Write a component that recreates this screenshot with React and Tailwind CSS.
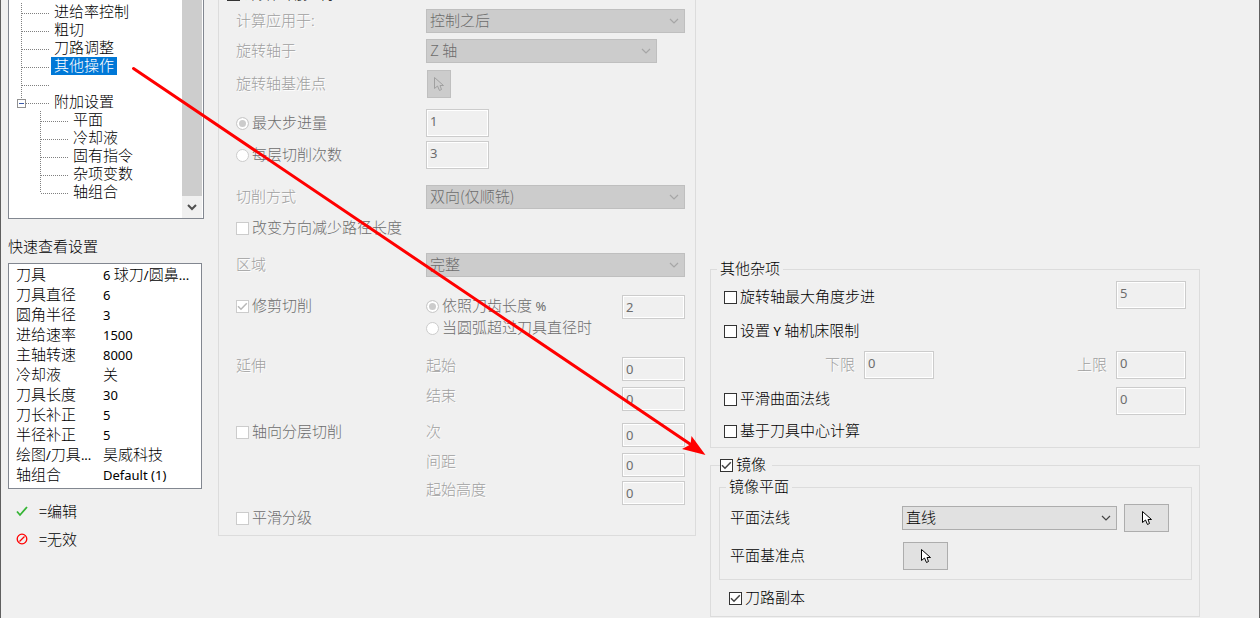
import React from "react";

const CURSOR_OUTLINE =
  "M0.5 0.5v11l3-2.5 2 4.5 2-1-1.5-4h3.5z";

function Latin({ children }) {
  return (
    <span className="font-['Noto_Sans',sans-serif] text-[13px] leading-none font-normal">
      {children}
    </span>
  );
}

function Caption({ children, className = "" }) {
  return (
    <span className={`pb-[2px] leading-[16px] text-[#a0a0a0] [text-shadow:1px_1px_0_#fff] ${className}`}>
      {children}
    </span>
  );
}

function Check({ checked, disabled, children, className = "" }) {
  return (
    <label
      className={`flex items-center gap-[3px] leading-[16px] whitespace-nowrap ${
        disabled ? "text-[#6d6d6d]" : "text-black"
      } ${className}`}
    >
      <span className="grid size-[13px] shrink-0">
        <input
          type="checkbox"
          defaultChecked={checked}
          disabled={disabled}
          className="peer col-start-1 row-start-1 size-[13px] appearance-none border border-[#333] bg-white disabled:border-[#ccc]"
        />
        <svg
          viewBox="0 0 13 13"
          className="pointer-events-none invisible col-start-1 row-start-1 size-[13px] text-[#444] peer-checked:visible peer-disabled:text-[#b8b8b8]"
          fill="none"
          stroke="currentColor"
          strokeWidth="1.5"
        >
          <path d="M2 6.2l3 3 5.8-6" />
        </svg>
      </span>
      <span className="pb-[2px]">{children}</span>
    </label>
  );
}

function Radio({ name, checked, children, className = "" }) {
  return (
    <label
      className={`flex items-center gap-[3px] leading-[16px] whitespace-nowrap text-[#6d6d6d] ${className}`}
    >
      <input
        type="radio"
        name={name}
        defaultChecked={checked}
        disabled
        className="size-[13px] shrink-0 appearance-none rounded-full border border-[#ccc] bg-white checked:bg-[#ccc] checked:shadow-[inset_0_0_0_2px_#fff]"
      />
      <span className="pb-[2px]">{children}</span>
    </label>
  );
}

function Field({ label, value, className = "" }) {
  return (
    <input
      type="text"
      aria-label={label}
      defaultValue={value}
      disabled
      className={`shrink-0 border border-[#ccc] bg-[#f0f0f0] pl-[3px] font-['Noto_Sans',sans-serif] text-[13px] font-normal text-[#6d6d6d] shadow-[inset_0_0_0_1px_#fff] ${className}`}
    />
  );
}

function Select({ label, value, disabled, className = "" }) {
  return (
    <span className={`grid h-[24px] ${className}`}>
      <select
        aria-label={label}
        disabled={disabled}
        defaultValue={value}
        className="col-start-1 row-start-1 h-[24px] w-full appearance-none border border-[#adadad] bg-[#e1e1e1] pr-6 pb-[2px] pl-[3px] leading-[20px] text-black opacity-100 disabled:border-[#bfbfbf] disabled:bg-[#ccc] disabled:text-[#6d6d6d]"
      >
        <option>{value}</option>
      </select>
      <svg
        viewBox="0 0 10 6"
        className={`pointer-events-none col-start-1 row-start-1 mr-[6px] h-[6px] w-[10px] self-center justify-self-end ${
          disabled ? "text-[#a6a6a6]" : "text-[#444]"
        }`}
        fill="none"
        stroke="currentColor"
        strokeWidth="1.2"
      >
        <path d="M1 1l4 4 4-4" />
      </svg>
    </span>
  );
}

function PickButton({ label, disabled, className = "" }) {
  return (
    <button
      type="button"
      aria-label={label}
      disabled={disabled}
      className={`flex h-[28px] shrink-0 items-center justify-center border border-[#adadad] bg-[#e1e1e1] text-black disabled:border-[#bfbfbf] disabled:bg-[#ccc] disabled:text-[#a0a0a0] ${className}`}
    >
      <svg viewBox="0 0 10 15" className="h-[15px] w-[10px]" stroke="currentColor" strokeWidth="1">
        <path d={CURSOR_OUTLINE} fill={disabled ? "none" : "#fff"} />
      </svg>
    </button>
  );
}

const TREE = [
  { text: "进给率控制", level: 1 },
  { text: "粗切", level: 1 },
  { text: "刀路调整", level: 1 },
  { text: "其他操作", level: 1, selected: true },
  { text: "", level: 1 },
  { text: "附加设置", level: 1, expander: true },
  { text: "平面", level: 2 },
  { text: "冷却液", level: 2 },
  { text: "固有指令", level: 2 },
  { text: "杂项变数", level: 2 },
  { text: "轴组合", level: 2, last: true },
];

function Guide({ level, expander, last }) {
  const x = level === 1 ? 12.5 : 31.5;
  return (
    <svg
      className={level === 1 ? "h-[18px] w-[42px] shrink-0" : "h-[18px] w-[61px] shrink-0"}
      fill="none"
      stroke="#808080"
      strokeDasharray="1 1"
      shapeRendering="crispEdges"
    >
      <path d={`M${x} 0V${expander || last ? 10 : 18}`} />
      <path d={`M${x} 10.5h27`} />
      {expander && (
        <g strokeDasharray="none">
          <rect x="8.5" y="6.5" width="8" height="8" fill="#fff" stroke="#919191" />
          <path d="M10 10.5h5" stroke="#3b5aa8" />
        </g>
      )}
    </svg>
  );
}

function Tree() {
  return (
    <div className="flex h-[219px] w-[196px] border border-t-0 border-[#828790] bg-white">
      <ul className="flex-1 pt-[3px]">
        {TREE.map((node, i) => (
          <li key={i} className="flex h-[18px] items-center">
            <Guide {...node} />
            {node.text && (
              <button
                type="button"
                className={`h-[18px] px-[3px] pb-[2px] leading-[16px] ${
                  node.selected ? "bg-[#0078d7] text-white" : "text-black"
                }`}
              >
                {node.text}
              </button>
            )}
          </li>
        ))}
      </ul>
      <div className="mr-[1px] flex w-[20px] flex-col bg-[#f0f0f0]">
        <div className="flex-1 bg-[#cdcdcd]" />
        <button type="button" aria-label="向下滚动" className="flex h-[22px] items-center justify-center">
          <svg viewBox="0 0 10 7" className="h-[7px] w-[10px]" fill="none" stroke="#505050" strokeWidth="2">
            <path d="M1 1l4 4 4-4" />
          </svg>
        </button>
      </div>
    </div>
  );
}

const SETTINGS = [
  ["刀具", <><Latin>6 </Latin>球刀<Latin>/</Latin>圆鼻<Latin>...</Latin></>],
  ["刀具直径", <Latin>6</Latin>],
  ["圆角半径", <Latin>3</Latin>],
  ["进给速率", <Latin>1500</Latin>],
  ["主轴转速", <Latin>8000</Latin>],
  ["冷却液", "关"],
  ["刀具长度", <Latin>30</Latin>],
  ["刀长补正", <Latin>5</Latin>],
  ["半径补正", <Latin>5</Latin>],
  [<>绘图<Latin>/</Latin>刀具<Latin>...</Latin></>, "昊威科技"],
  ["轴组合", <Latin>Default (1)</Latin>],
];

function QuickView() {
  return (
    <section>
      <h2 className="mt-[18px] leading-[18px]">快速查看设置</h2>
      <div className="mt-[8px] w-[194px] border border-[#828790] bg-white pb-[4px]">
        <table className="w-full table-fixed">
          <tbody>
            {SETTINGS.map(([name, value], i) => (
              <tr key={i} className="h-[20px]">
                <th scope="row" className="w-[94px] pl-[7px] text-left leading-[18px] font-light whitespace-nowrap">
                  {name}
                </th>
                <td className="leading-[18px] whitespace-nowrap">{value}</td>
              </tr>
            ))}
          </tbody>
        </table>
      </div>
      <ul className="mt-[8px] pl-[8px]">
        <li className="flex h-[28px] items-center gap-[11px] leading-[18px]">
          <svg viewBox="0 0 12 12" className="size-[12px]" fill="none" stroke="#35b535" strokeWidth="1.8">
            <path d="M1 6.5l3 3.5 7-8" />
          </svg>
          <span>=编辑</span>
        </li>
        <li className="flex h-[28px] items-center gap-[11px] leading-[18px]">
          <svg viewBox="0 0 12 12" className="size-[12px]" fill="none" stroke="#f00" strokeWidth="1.3">
            <circle cx="6" cy="6" r="4.8" />
            <path d="M3.5 8.5l5-5" />
          </svg>
          <span>=无效</span>
        </li>
      </ul>
    </section>
  );
}

function Row({ className = "", children }) {
  return <div className={`grid grid-cols-[190px_minmax(0,1fr)] ${className}`}>{children}</div>;
}

function ValueRow({ lead, label, value, className }) {
  return (
    <Row className={`items-start ${className}`}>
      {lead || <span />}
      <div className="flex items-start justify-between">
        <Caption>{label}</Caption>
        <Field label={label} value={value} className="h-[24px] w-[63px]" />
      </div>
    </Row>
  );
}

function AxisGroup() {
  return (
    <section className="self-start border border-t-0 border-[#dcdcdc] pr-[10px] pb-[8px] pl-[17px]">
      <Check checked className="-mt-[15px] -ml-[9px] h-[18px]">计算应用控制</Check>
      <Row className="mt-[6px] items-center">
        <Caption>计算应用于:</Caption>
        <Select label="计算应用于" value="控制之后" disabled />
      </Row>
      <Row className="mt-[6px] items-center">
        <Caption>旋转轴于</Caption>
        <Select label="旋转轴于" value="Z 轴" disabled className="mr-[28px]" />
      </Row>
      <Row className="mt-[7px] items-center">
        <Caption>旋转轴基准点</Caption>
        <PickButton label="选择旋转轴基准点" disabled className="ml-[1px] w-[24px]" />
      </Row>
      <Row className="mt-[11px] items-center">
        <Radio name="step" checked>最大步进量</Radio>
        <Field label="最大步进量" value="1" className="h-[28px] w-[63px] pb-[4px]" />
      </Row>
      <Row className="mt-[4px] items-center">
        <Radio name="step">每层切削次数</Radio>
        <Field label="每层切削次数" value="3" className="h-[28px] w-[63px] pb-[4px]" />
      </Row>
      <Row className="mt-[16px] items-center">
        <Caption>切削方式</Caption>
        <Select label="切削方式" value="双向(仅顺铣)" disabled />
      </Row>
      <Check disabled className="mt-[10px]">改变方向减少路径长度</Check>
      <Row className="mt-[16px] items-center">
        <Caption>区域</Caption>
        <Select label="区域" value="完整" disabled />
      </Row>
      <Row className="mt-[18px] h-[62px] items-start">
        <Check disabled checked className="h-[22px]">修剪切削</Check>
        <div className="flex items-start justify-between">
          <div>
            <Radio name="trim" checked className="h-[22px]">
              依照刀齿长度<Latin> %</Latin>
            </Radio>
            <Radio name="trim" className="h-[22px]">当圆弧超过刀具直径时</Radio>
          </div>
          <Field label="刀齿长度百分比" value="2" className="h-[24px] w-[63px]" />
        </div>
      </Row>
      <ValueRow className="h-[30px]" lead={<Caption>延伸</Caption>} label="起始" value="0" />
      <ValueRow className="h-[36px]" label="结束" value="0" />
      <ValueRow className="h-[30px]" lead={<Check disabled>轴向分层切削</Check>} label="次" value="0" />
      <ValueRow className="h-[28px]" label="间距" value="0" />
      <ValueRow className="h-[28px]" label="起始高度" value="0" />
      <Check disabled>平滑分级</Check>
    </section>
  );
}

function MiscGroup() {
  return (
    <fieldset className="border border-[#dcdcdc]">
      <legend className="ml-[6px] px-[3px] pb-[2px] leading-[16px]">其他杂项</legend>
      <div className="px-[13px] pt-[3px]">
        <div className="flex items-start justify-between">
          <Check className="h-[32px]">旋转轴最大角度步进</Check>
          <Field label="最大角度步进" value="5" className="h-[28px] w-[70px] pb-[4px]" />
        </div>
        <Check className="mt-[2px] h-[32px]">
          设置<Latin> Y </Latin>轴机床限制
        </Check>
        <div className="mt-[4px] flex items-center justify-between pl-[101px]">
          <label className="flex items-center gap-[9px]">
            <Caption>下限</Caption>
            <Field value="0" className="h-[28px] w-[70px] pb-[4px]" />
          </label>
          <label className="flex items-center gap-[9px]">
            <Caption>上限</Caption>
            <Field value="0" className="h-[28px] w-[70px] pb-[4px]" />
          </label>
        </div>
        <div className="mt-[8px] flex items-start justify-between">
          <Check className="h-[24px]">平滑曲面法线</Check>
          <Field label="平滑曲面法线" value="0" className="h-[28px] w-[70px] pb-[4px]" />
        </div>
        <Check className="h-[32px]">基于刀具中心计算</Check>
      </div>
    </fieldset>
  );
}

function MirrorGroup() {
  return (
    <fieldset className="mt-[8px] border border-[#dcdcdc]">
      <legend className="ml-[9px] pr-[6px]">
        <Check checked>镜像</Check>
      </legend>
      <fieldset className="mt-[4px] mr-[7px] ml-[8px] border border-[#dcdcdc] pb-[9px]">
        <legend className="ml-[6px] px-[3px] pb-[2px] leading-[16px]">镜像平面</legend>
        <div className="flex flex-col gap-[10px] pt-[8px] pr-[22px] pl-[10px]">
          <div className="flex items-center">
            <span className="w-[172px] pb-[2px] leading-[16px]">平面法线</span>
            <Select label="平面法线" value="直线" className="flex-1" />
            <PickButton label="选择平面法线" className="ml-[7px] w-[45px]" />
          </div>
          <div className="flex items-center">
            <span className="w-[173px] pb-[2px] leading-[16px]">平面基准点</span>
            <PickButton label="选择平面基准点" className="w-[45px]" />
          </div>
        </div>
      </fieldset>
      <Check checked className="ml-[18px] h-[36px]">刀路副本</Check>
    </fieldset>
  );
}

export default function App() {
  return (
    <main className="relative min-h-screen overflow-hidden border-x border-[#5f5f5f] bg-[#f0f0f0] font-['Noto_Sans_CJK_SC',sans-serif] text-[15px] font-light text-black">
      <div className="grid grid-cols-[196px_minmax(0,478fr)_minmax(0,490fr)] gap-[14px] pr-[59px] pl-[7px]">
        <aside>
          <Tree />
          <QuickView />
        </aside>
        <AxisGroup />
        <div className="pt-[260px]">
          <MiscGroup />
          <MirrorGroup />
        </div>
      </div>
      <svg
        className="pointer-events-none absolute top-0 left-0 h-[460px] w-[710px]"
        viewBox="0 0 710 460"
        aria-hidden="true"
      >
        <path d="M132.500 68.500L692 446" stroke="#f00" strokeWidth="3" strokeLinecap="round" />
        <path d="M704.500 455L690.500 436L689.500 444.500L681 449z" fill="#f00" />
      </svg>
    </main>
  );
}
